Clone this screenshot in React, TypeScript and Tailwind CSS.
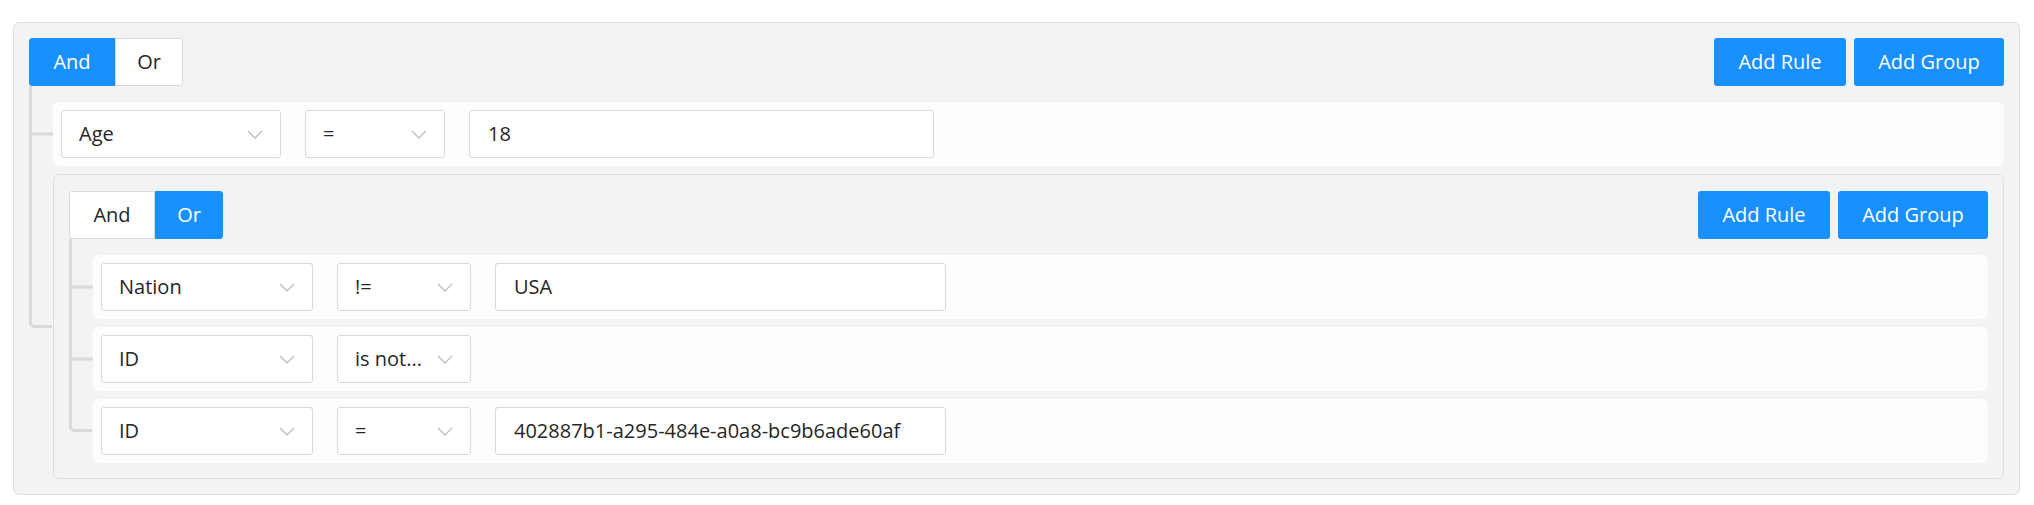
import React from "react";

type Rule = { kind: "rule"; field: string; op: string; value?: string };
type Group = { kind: "group"; conj: "And" | "Or"; children: Item[] };
type Item = Rule | Group;

const tree: Group = {
  kind: "group",
  conj: "And",
  children: [
    { kind: "rule", field: "Age", op: "=", value: "18" },
    {
      kind: "group",
      conj: "Or",
      children: [
        { kind: "rule", field: "Nation", op: "!=", value: "USA" },
        { kind: "rule", field: "ID", op: "is not..." },
        { kind: "rule", field: "ID", op: "=", value: "402887b1-a295-484e-a0a8-bc9b6ade60af" },
      ],
    },
  ],
};

// field / operator / value widths per nesting level
const widths = [
  { field: "w-[220px]", op: "w-[140px]", value: "w-[465px]" },
  { field: "w-[212px]", op: "w-[134px]", value: "w-[451px]" },
];

const Chevron = () => (
  <svg width="16" height="9" viewBox="0 0 16 9" className="shrink-0">
    <path d="M1 1l7 7 7-7" fill="none" stroke="#bfbfbf" strokeWidth="1.4" />
  </svg>
);

const Select = ({ label, width }: { label: string; width: string }) => (
  <div
    className={`${width} h-[48px] flex items-center justify-between pl-[17px] pr-[17px] bg-white border border-[#d9d9d9] rounded-[3px]`}
  >
    <span className="whitespace-nowrap">{label}</span>
    <Chevron />
  </div>
);

const RuleRow = ({ rule, depth }: { rule: Rule; depth: number }) => {
  const w = widths[depth] ?? widths[1];
  return (
    <div className="h-[64px] px-[8px] flex items-center gap-[24px] bg-[#fdfdfd] rounded-[6px]">
      <Select label={rule.field} width={w.field} />
      <Select label={rule.op} width={w.op} />
      {rule.value !== undefined && (
        <div
          className={`${w.value} h-[48px] flex items-center pl-[18px] bg-white border border-[#d9d9d9] rounded-[3px] whitespace-nowrap`}
        >
          {rule.value}
        </div>
      )}
    </div>
  );
};

const Connector = ({ first, last }: { first: boolean; last: boolean }) => {
  if (last) {
    return (
      <span
        className={`absolute left-[-24px] w-[23px] border-l-[3px] border-b-[3px] border-[#d9d9d9] rounded-bl-[5px] ${
          first ? "top-[-16px] h-[calc(50%+17px)]" : "top-[-8px] h-[calc(50%+9px)]"
        }`}
      />
    );
  }
  return (
    <>
      <span
        className={`absolute left-[-24px] bottom-0 w-[3px] bg-[#d9d9d9] ${
          first ? "top-[-16px]" : "top-[-8px]"
        }`}
      />
      <span className="absolute left-[-24px] top-1/2 -translate-y-1/2 w-[24px] h-[3px] bg-[#d9d9d9]" />
    </>
  );
};

const GroupBox = ({ group, depth }: { group: Group; depth: number }) => (
  <div
    className={`bg-[#f2f3f5] border border-[#dedede] rounded-[6px] px-[15px] pb-[15px] ${
      depth === 0 ? "pt-[15px]" : "pt-[16px]"
    }`}
  >
    <div className="flex items-center justify-between">
      <div className="flex h-[48px]">
        {(["And", "Or"] as const).map((c, i) => {
          const active = group.conj === c;
          return (
            <div
              key={c}
              className={`flex items-center justify-center ${c === "And" ? "w-[86px]" : "w-[68px]"} ${
                i === 0 ? "rounded-l-[3px]" : "rounded-r-[3px]"
              } ${
                active
                  ? "bg-[#1890ff] text-white border border-[#1890ff]"
                  : "bg-white text-[#262626] border border-[#d9d9d9]"
              }`}
            >
              {c}
            </div>
          );
        })}
      </div>
      <div className="flex gap-[8px]">
        <button className="w-[132px] h-[48px] bg-[#1890ff] text-white rounded-[3px]">Add Rule</button>
        <button className="w-[150px] h-[48px] bg-[#1890ff] text-white rounded-[3px]">Add Group</button>
      </div>
    </div>
    <div className="mt-[16px] pl-[24px] flex flex-col gap-[8px]">
      {group.children.map((child, i) => (
        <div key={i} className="relative">
          <Connector first={i === 0} last={i === group.children.length - 1} />
          {child.kind === "rule" ? (
            <RuleRow rule={child} depth={depth} />
          ) : (
            <GroupBox group={child} depth={depth + 1} />
          )}
        </div>
      ))}
    </div>
  </div>
);

export default function App() {
  return (
    <div className="w-[2034px] h-[505px] bg-white pl-[13px] pr-[14px] pt-[22px] text-[20px] leading-none text-[#262626] font-['Open_Sans','Noto_Sans',sans-serif]">
      <GroupBox group={tree} depth={0} />
    </div>
  );
}
